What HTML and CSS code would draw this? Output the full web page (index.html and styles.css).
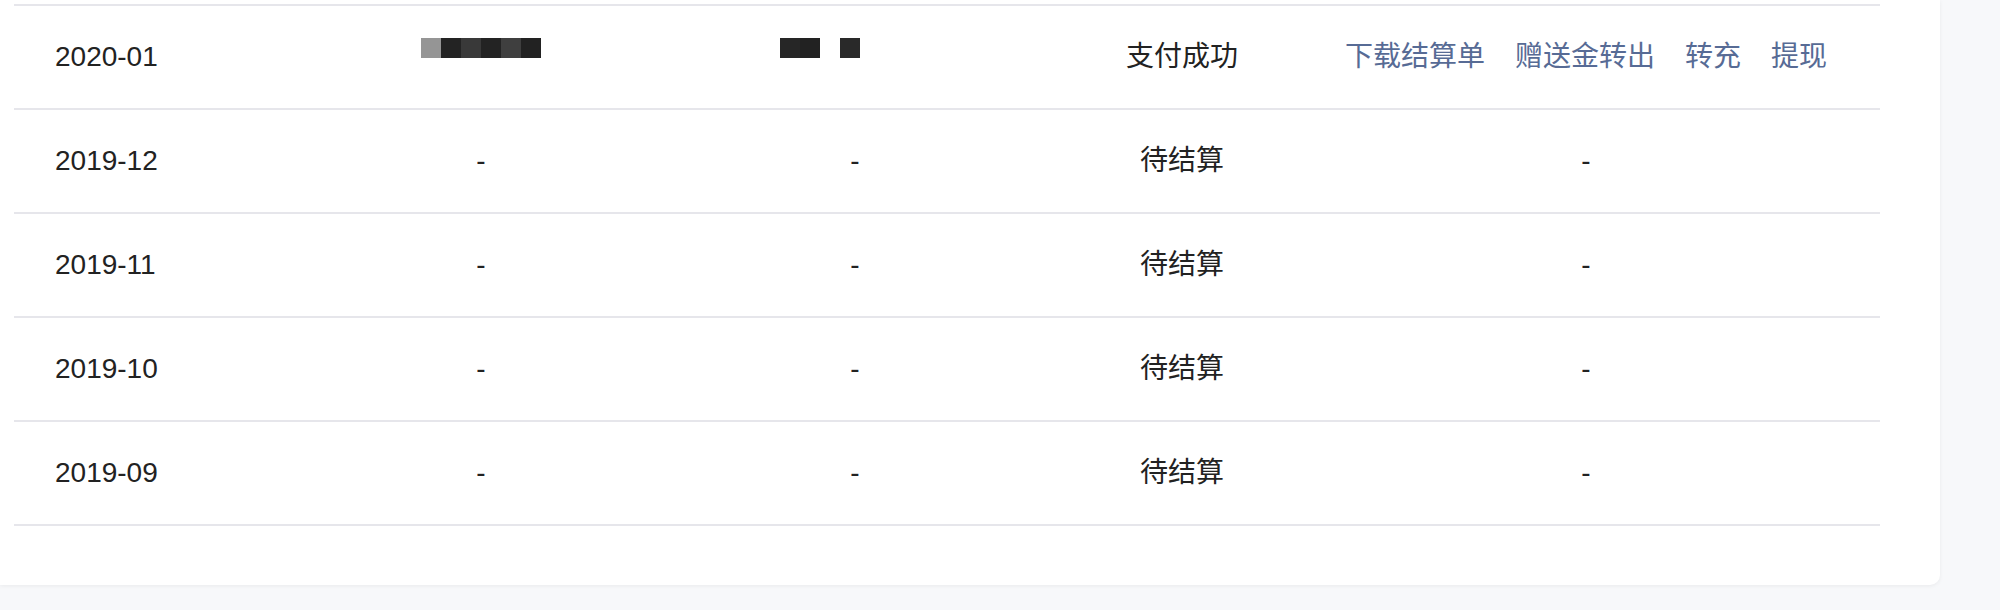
FILE: index.html
```html
<!DOCTYPE html>
<html lang="zh-CN">
<head>
<meta charset="utf-8">
<title>结算单</title>
<link rel="stylesheet" href="styles.css">
</head>
<body>
<div class="card">
  <div class="table">
    <div class="row">
      <div class="cell first">2020-01</div>
      <div class="cell"><span class="mosaic m1"><i class="c1"></i><i class="c2"></i><i class="c3"></i><i class="c2"></i><i class="c4"></i><i class="c5"></i></span></div>
      <div class="cell"><span class="mosaic m2"><i class="c6"></i><i class="c5"></i><i class="gap"></i><i class="c7"></i></span></div>
      <div class="cell">支付成功</div>
      <div class="cell last links"><a>下载结算单</a><a>赠送金转出</a><a>转充</a><a>提现</a></div>
    </div>
    <div class="row">
      <div class="cell first">2019-12</div>
      <div class="cell">-</div>
      <div class="cell">-</div>
      <div class="cell">待结算</div>
      <div class="cell last">-</div>
    </div>
    <div class="row">
      <div class="cell first">2019-11</div>
      <div class="cell">-</div>
      <div class="cell">-</div>
      <div class="cell">待结算</div>
      <div class="cell last">-</div>
    </div>
    <div class="row">
      <div class="cell first">2019-10</div>
      <div class="cell">-</div>
      <div class="cell">-</div>
      <div class="cell">待结算</div>
      <div class="cell last">-</div>
    </div>
    <div class="row">
      <div class="cell first">2019-09</div>
      <div class="cell">-</div>
      <div class="cell">-</div>
      <div class="cell">待结算</div>
      <div class="cell last">-</div>
    </div>
  </div>
</div>
</body>
</html>
```
FILE: styles.css
```css
html, body {
  margin: 0;
  padding: 0;
  background: #f7f8fa;
}
body {
  font-family: "Liberation Sans", "Noto Sans CJK SC", sans-serif;
  font-size: 28px;
  color: #222;
  height: 610px;
  overflow: hidden;
}
.card {
  width: 1940px;
  background: #fff;
  padding: 4px 0 59px 0;
  box-sizing: border-box;
  border-bottom-right-radius: 10px;
  box-shadow: 0 1px 4px rgba(0, 0, 0, 0.06);
}
.table {
  margin-left: 14px;
  width: 1866px;
}
.row {
  display: grid;
  grid-template-columns: 280px 374px 374px 280px 1fr;
  height: 104px;
  border-top: 2px solid #e6e6eb;
  box-sizing: border-box;
}
.row:last-child {
  height: 106px;
  border-bottom: 2px solid #e6e6eb;
}
.cell {
  display: flex;
  align-items: center;
  justify-content: center;
  line-height: 1;
}
.cell.first {
  justify-content: flex-start;
  padding-left: 41px;
}
.cell.last {
  padding-right: 30px;
}
.links {
  gap: 30px;
}
.links a {
  color: #576b95;
  text-decoration: none;
  cursor: pointer;
}
.mosaic {
  display: flex;
  height: 20px;
  margin-bottom: 18px;
}
.mosaic i {
  display: block;
  width: 20px;
  height: 20px;
}
.m2 {
  margin-right: 70px;
}
.c1 { background: #959595; }
.c2 { background: #232323; }
.c3 { background: #393939; }
.c4 { background: #3f3f3f; }
.c5 { background: #222222; }
.c6 { background: #262626; }
.c7 { background: #292929; }
.mosaic .gap { background: transparent; }
```
